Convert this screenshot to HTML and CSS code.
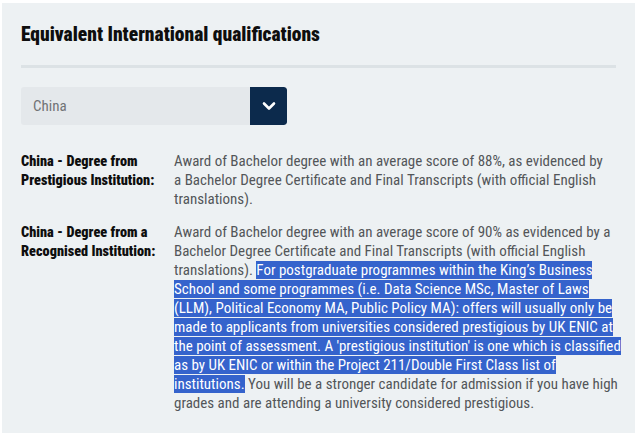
FILE: index.html
```html
<!DOCTYPE html>
<html lang="en">
<head>
<meta charset="utf-8">
<title>Equivalent International qualifications</title>
<link rel="stylesheet" href="styles.css">
</head>
<body>
<section class="panel">
  <h2 class="title">Equivalent International qualifications</h2>
  <hr class="divider">
  <div class="select">
    <span class="select-value">China</span>
    <span class="select-btn">
      <svg width="14" height="10" viewBox="0 0 14 10"><path d="M2 2.5 L7 7.5 L12 2.5" fill="none" stroke="#fff" stroke-width="2.6" stroke-linecap="round" stroke-linejoin="round"/></svg>
    </span>
  </div>
  <dl class="quals">
    <dt class="label">China - Degree from<br>Prestigious Institution:</dt>
    <dd class="desc">Award of Bachelor degree with an average score of 88%, as evidenced by<br>a Bachelor Degree Certificate and Final Transcripts (with official English<br>translations).</dd>
    <dt class="label">China - Degree from a<br>Recognised Institution:</dt>
    <dd class="desc">Award of Bachelor degree with an average score of 90% as evidenced by a<br>Bachelor Degree Certificate and Final Transcripts (with official English<br>translations). <span class="sel">For postgraduate programmes within the King’s Business<br>School and some programmes (i.e. Data Science MSc, Master of Laws<br>(LLM), Political Economy MA, Public Policy MA): offers will usually only be<br>made to applicants from universities considered prestigious by UK ENIC at<br>the point of assessment. A 'prestigious institution' is one which is classified<br>as by UK ENIC or within the Project 211/Double First Class list of<br>institutions.</span> You will be a stronger candidate for admission if you have high<br>grades and are attending a university considered prestigious.</dd>
  </dl>
</section>
</body>
</html>
```
FILE: styles.css
```css
html, body {
  margin: 0;
  padding: 0;
  background: #ffffff;
}
body {
  padding: 3px 2px 6px 2px;
  font-family: Roboto, "Liberation Sans", sans-serif;
  font-stretch: 80%;
}
.panel {
  background: #edf1f3;
  height: 430px;
  box-sizing: border-box;
  padding: 20px 19px 0 19px;
}
.title {
  margin: 0;
  font-size: 19.5px;
  line-height: 24px;
  font-weight: 900;
  font-stretch: 85%;
  color: #0e0e0e;
  white-space: nowrap;
}
.divider {
  border: 0;
  height: 3px;
  background: #dce2e5;
  margin: 18px 0 19px 0;
  width: 595px;
}
.select {
  display: flex;
  width: 266px;
  height: 38px;
  border-radius: 3px;
  overflow: hidden;
  background: #e4e8eb;
}
.select-value {
  flex: 1;
  display: flex;
  align-items: center;
  padding-left: 12px;
  font-size: 15px;
  color: #707376;
}
.select-btn {
  width: 37px;
  background: #0c2a4c;
  display: flex;
  align-items: center;
  justify-content: center;
  border-radius: 0 3px 3px 0;
}
.quals {
  margin: 27px 0 0 0;
  display: grid;
  grid-template-columns: 153px 1fr;
  row-gap: 14px;
}
.label {
  margin: 0;
  font-size: 14.3px;
  line-height: 19px;
  font-weight: 900;
  font-stretch: 84%;
  color: #0e0e0e;
  white-space: nowrap;
}
.desc {
  margin: 0;
  font-size: 15px;
  line-height: 19px;
  color: #535659;
  white-space: nowrap;
}
.sel {
  background: #3563cc;
  color: #ffffff;
}
```
